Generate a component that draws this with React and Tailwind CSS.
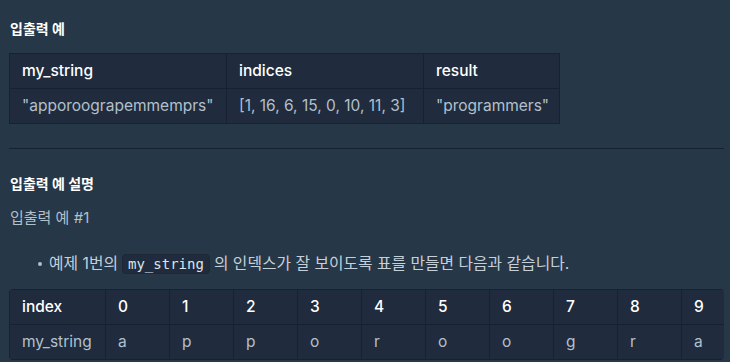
import React from 'react';

const example = { my_string: '"apporoograpemmemprs"', indices: '[1, 16, 6, 15, 0, 10, 11, 3]', result: '"programmers"' };
const chars = 'apporoograpemmemprs'.split('');

export default function App() {
  return (
    <div className="w-[730px] h-[362px] overflow-hidden bg-[#263747] font-['Inter','Noto_Sans_CJK_KR',sans-serif]">
      <div className="pl-[9px] pr-[6px]">
        <h5 className="pt-[20px] pl-px text-[14px] leading-[18px] font-bold text-white">입출력 예</h5>

        <table className="mt-[15px] w-[550px] table-fixed border-collapse bg-[#202b3d] text-[15.5px] leading-[20px]">
          <thead>
            <tr>
              <th className="h-[35px] w-[217px] border border-[#172130] px-[12px] text-left font-medium text-white">my_string</th>
              <th className="h-[35px] w-[197px] border border-[#172130] px-[12px] text-left font-medium text-white">indices</th>
              <th className="h-[35px] w-[136px] border border-[#172130] px-[12px] text-left font-medium text-white">result</th>
            </tr>
          </thead>
          <tbody>
            <tr>
              <td className="h-[35px] whitespace-nowrap border border-[#172130] px-[12px] text-[#b2c0cc]">{example.my_string}</td>
              <td className="h-[35px] whitespace-nowrap border border-[#172130] px-[12px] text-[#b2c0cc]">{example.indices}</td>
              <td className="h-[35px] whitespace-nowrap border border-[#172130] px-[12px] text-[#b2c0cc]">{example.result}</td>
            </tr>
          </tbody>
        </table>

        <hr className="mt-[24px] w-[715px] border-0 border-t border-[#172130]" />

        <h5 className="mt-[26px] pl-px text-[14px] leading-[18px] font-bold text-white">입출력 예 설명</h5>

        <p className="mt-[14px] pl-px text-[15px] leading-[22px] text-[#b2c0cc]">입출력 예 #1</p>

        <div className="mt-[23px] flex items-center h-[24px] text-[15.8px] text-[#c5d0da]">
          <span className="ml-[29px] mr-[7px] h-[4px] w-[4px] rounded-full bg-[#b2c0cc]" />
          <span>예제 1번의</span>
          <code className="mx-[4px] h-[20px] rounded-[4px] border border-[#1d2735] bg-[#202b3d] px-[5px] font-['DejaVu_Sans_Mono',monospace] text-[14px] leading-[18px] text-[#dde5ec]">my_string</code>
          <span>의 인덱스가 잘 보이도록 표를 만들면 다음과 같습니다.</span>
        </div>

        <div className="mt-[13px] w-[715px] overflow-x-auto rounded-[4px] [&::-webkit-scrollbar]:h-[6px] [&::-webkit-scrollbar-track]:bg-transparent [&::-webkit-scrollbar-thumb]:bg-[#34465a] [&::-webkit-scrollbar-thumb]:rounded-full">
          <table className="w-[1312px] table-fixed border-collapse bg-[#202b3d] text-[15.5px] leading-[20px]">
            <thead>
              <tr>
                <th className="h-[35px] w-[96px] border border-[#172130] px-[12px] text-left font-medium text-white">index</th>
                {chars.map((_, i) => (
                  <th key={i} className="h-[35px] w-[64px] border border-[#172130] px-[12px] text-left font-medium text-white">{i}</th>
                ))}
              </tr>
            </thead>
            <tbody>
              <tr>
                <td className="h-[35px] border border-[#172130] px-[12px] text-[#b2c0cc]">my_string</td>
                {chars.map((c, i) => (
                  <td key={i} className="h-[35px] border border-[#172130] px-[12px] text-[#b2c0cc]">{c}</td>
                ))}
              </tr>
            </tbody>
          </table>
        </div>
      </div>
    </div>
  );
}
